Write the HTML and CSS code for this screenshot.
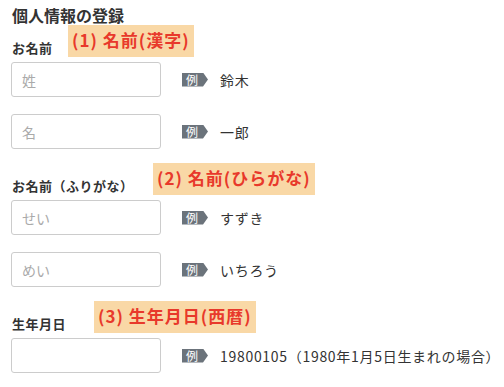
FILE: index.html
```html
<html>
<head>
    <title>個人情報の登録</title>
    <link rel="stylesheet" href="styles.css">
</head>
<body>

<h2 class="title">個人情報の登録</h2>

<!-- お名前（漢字） -->
<div class="section">
    <div class="label-row">
        <span class="label">お名前</span>
        <span class="note note-1">(1) 名前(漢字)</span>
    </div>
    <div class="row">
        <input class="field" type="text" placeholder="姓">
        <span class="badge">例</span>
        <span class="sample">鈴木</span>
    </div>
    <div class="row">
        <input class="field" type="text" placeholder="名">
        <span class="badge">例</span>
        <span class="sample">一郎</span>
    </div>
</div>

<!-- お名前（ふりがな） -->
<div class="section">
    <div class="label-row">
        <span class="label">お名前（ふりがな）</span>
        <span class="note note-2">(2) 名前(ひらがな)</span>
    </div>
    <div class="row">
        <input class="field" type="text" placeholder="せい">
        <span class="badge">例</span>
        <span class="sample">すずき</span>
    </div>
    <div class="row">
        <input class="field" type="text" placeholder="めい">
        <span class="badge">例</span>
        <span class="sample">いちろう</span>
    </div>
</div>

<!-- 生年月日 -->
<div class="section">
    <div class="label-row">
        <span class="label">生年月日</span>
        <span class="note note-3">(3) 生年月日(西暦)</span>
    </div>
    <div class="row">
        <input class="field" type="text">
        <span class="badge">例</span>
        <span class="sample">19800105（1980年1月5日生まれの場合）</span>
    </div>
</div>

</body>
</html>
```

FILE: styles.css
```css
/* ページ全体 */
body {
    margin: 0;
    padding: 3px 0 0 11px;
    background-color: #fff;
    color: #333;
    font-family: "Noto Sans CJK JP", "Noto Sans", sans-serif;
}

/* 見出し */
.title {
    margin: 0 0 11px 1px;
    font-size: 16px;
    line-height: 24px;
    font-weight: bold;
}

/* 各ブロック */
.section {
    margin-bottom: 27px;
}

.label-row {
    position: relative;
    height: 20px;
    margin-bottom: 4px;
}

.label {
    margin-left: 1px;
    font-size: 13px;
    line-height: 20px;
    font-weight: bold;
    letter-spacing: 0.5px;
}

/* 赤い注記 */
.note {
    position: absolute;
    bottom: 1px;
    height: 32px;
    padding: 0 4px;
    background-color: #f9d8a6;
    color: #e8392b;
    font-size: 17px;
    font-weight: bold;
    line-height: 30px;
    letter-spacing: 1px;
    white-space: nowrap;
}

.note-1 { left: 57px; }
.note-2 { left: 142px; }
.note-3 { left: 83px; }

/* 入力行 */
.row {
    display: flex;
    align-items: center;
    margin-bottom: 17px;
}

.row:last-child {
    margin-bottom: 0;
}

.field {
    flex-shrink: 0;
    box-sizing: border-box;
    width: 150px;
    height: 35px;
    padding: 0 10px;
    border: 1px solid #ccc;
    border-radius: 3px;
    font-family: inherit;
    font-size: 14px;
    color: #333;
}

.field::placeholder {
    color: #aaa;
}

/* 「例」ラベル */
.badge {
    flex-shrink: 0;
    box-sizing: border-box;
    width: 26px;
    height: 14px;
    margin: 0 12px 0 21px;
    padding-left: 4px;
    background-color: #6b737b;
    color: #fff;
    font-size: 12px;
    line-height: 14px;
    clip-path: polygon(0 0, 21px 0, 26px 50%, 21px 100%, 0 100%);
}

.sample {
    font-size: 14px;
    letter-spacing: 0.7px;
    white-space: nowrap;
}
```
